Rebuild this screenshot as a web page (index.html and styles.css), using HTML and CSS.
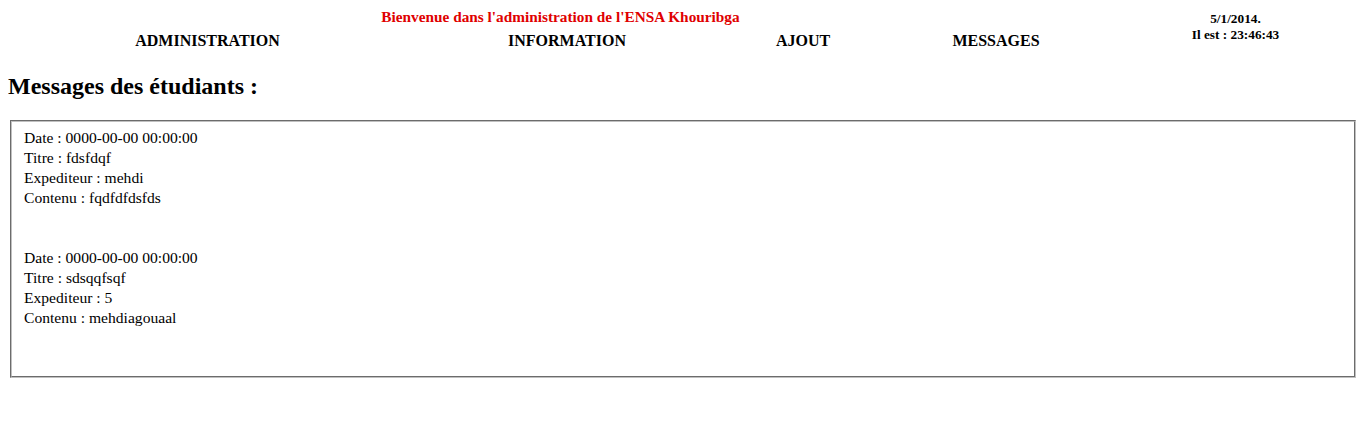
FILE: index.html
```html
<!DOCTYPE html>
<html lang="fr">
<head>
<meta charset="utf-8">
<title>Administration ENSA Khouribga</title>
<link rel="stylesheet" href="styles.css">
</head>
<body>
<header class="top">
  <div class="welcome">Bienvenue dans l'administration de l'ENSA Khouribga</div>
  <div class="clock">5/1/2014.<br>Il est : 23:46:43</div>
  <a class="nav nav-1" href="#">ADMINISTRATION</a>
  <a class="nav nav-2" href="#">INFORMATION</a>
  <a class="nav nav-3" href="#">AJOUT</a>
  <a class="nav nav-4" href="#">MESSAGES</a>
</header>
<h2 class="title">Messages des étudiants :</h2>
<fieldset class="messages">
  <div class="msg">
    Date : 0000-00-00 00:00:00<br>
    Titre : fdsfdqf<br>
    Expediteur : mehdi<br>
    Contenu : fqdfdfdsfds
  </div>
  <div class="msg">
    Date : 0000-00-00 00:00:00<br>
    Titre : sdsqqfsqf<br>
    Expediteur : 5<br>
    Contenu : mehdiagouaal
  </div>
</fieldset>
</body>
</html>
```

FILE: styles.css
```css
html, body {
  background: #fff;
}
body {
  margin: 8px;
  font-family: "Liberation Serif", "Times New Roman", serif;
  color: #000;
}
.top {
  display: grid;
  grid-template-columns: 399px 320px 152px 234px 1fr;
  grid-template-rows: 18px 18px;
  row-gap: 6px;
  padding-bottom: 2px;
}
.welcome {
  grid-column: 1 / 5;
  grid-row: 1;
  text-align: center;
  color: #e00000;
  font-weight: bold;
  font-size: 15.3px;
  line-height: 18px;
}
.clock {
  grid-column: 5;
  grid-row: 1 / 3;
  text-align: center;
  font-weight: bold;
  font-size: 13.3px;
  line-height: 16px;
  padding-top: 3px;
}
.nav {
  grid-row: 2;
  text-align: center;
  font-weight: bold;
  font-size: 16px;
  line-height: 18px;
  color: #000;
  text-decoration: none;
}
.nav-1 { grid-column: 1; }
.nav-2 { grid-column: 2; }
.nav-3 { grid-column: 3; }
.nav-4 { grid-column: 4; }
.title {
  font-size: 24px;
  font-weight: bold;
  margin: 20px 0;
  line-height: 28px;
}
.messages {
  margin: 2px;
  padding: 6px 12px 8px;
  border: 2px groove #c0c0c0;
  font-size: 15.6px;
  line-height: 20px;
}
.msg {
  padding-bottom: 40px;
}
```
